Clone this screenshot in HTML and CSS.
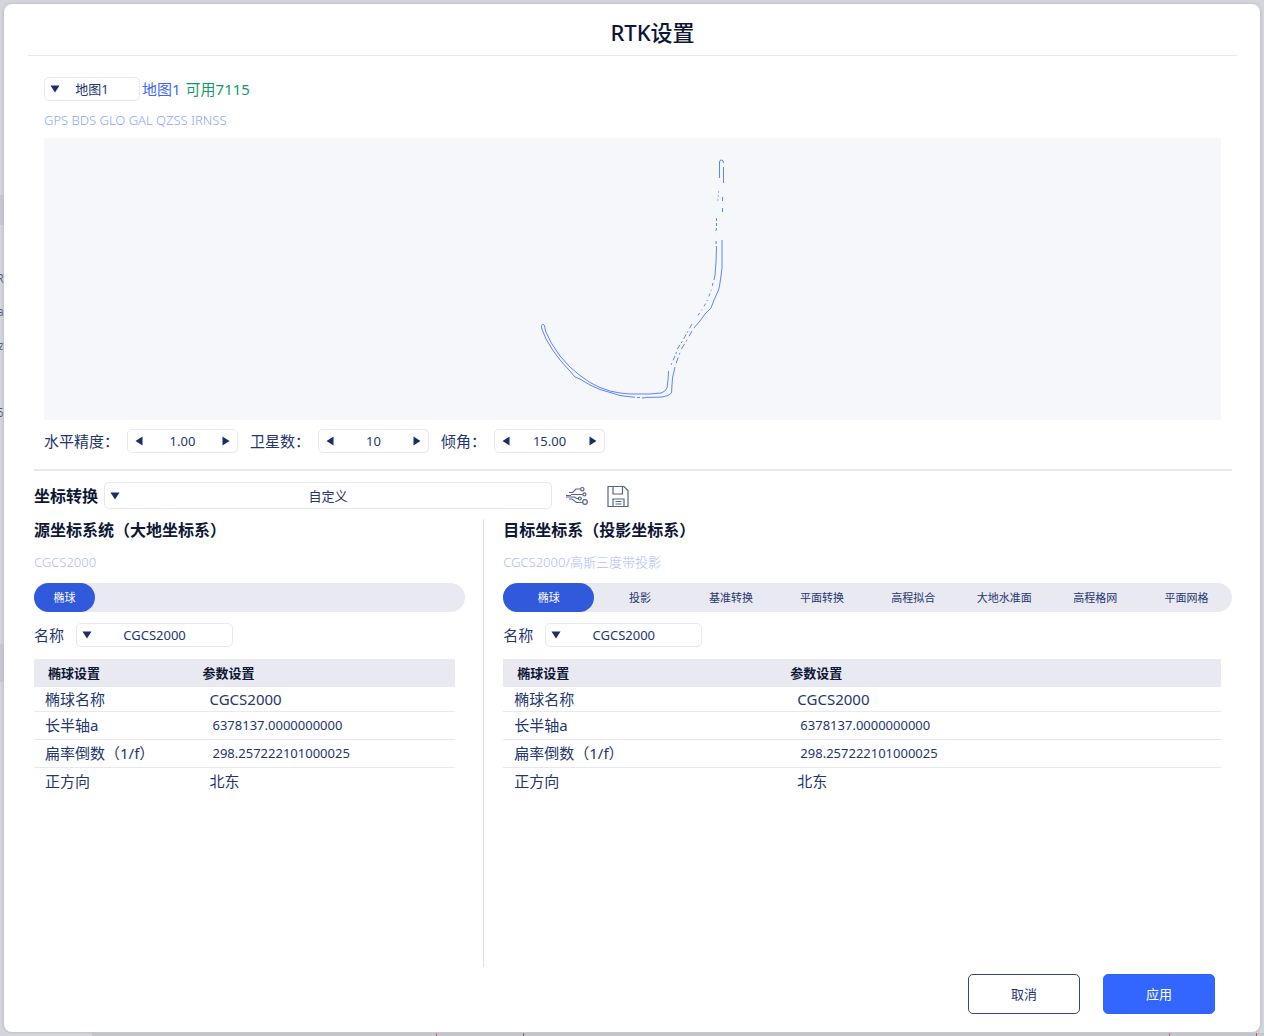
FILE: index.html
```html
<!DOCTYPE html>
<html lang="zh-CN">
<head>
<meta charset="utf-8">
<title>RTK设置</title>
<link rel="stylesheet" href="styles.css">
</head>
<body>
<div class="backdrop" aria-hidden="true">
  <span class="band band-a"></span>
  <span class="band band-b"></span>
  <span class="band band-c"></span>
  <span class="mark mark-r">R</span>
  <span class="mark mark-a">a</span>
  <span class="mark mark-z">z</span>
  <span class="mark mark-s">5</span>
  <span class="tick tick-a"></span>
  <span class="tick tick-b"></span>
  <span class="tick tick-c"></span>
  <span class="tick tick-d"></span>
</div>
<main class="dialog" role="dialog" aria-labelledby="dialog-title">
  <header class="dialog-header">
    <h1 id="dialog-title">RTK设置</h1>
  </header>

  <div class="dialog-body">
    <section class="status">
      <div class="map-row">
        <span class="dropdown dropdown-map">
          <select aria-label="地图"><option>地图1</option></select>
          <svg class="arrow" viewBox="0 0 10 8"><path d="M0.500 0.500H9.500L5 7.500z"/></svg>
        </span>
        <span class="map-name">地图1</span>
        <span class="map-ok">可用7115</span>
      </div>
      <p class="systems">GPS BDS GLO GAL QZSS IRNSS</p>
      <svg class="track" viewBox="44 138 1177 282" role="img" aria-label="轨迹">
        <path d="M719.500 178V162Q719.500 160 721.500 160Q723.500 160 723.500 163M723.500 167V183"/>
        <path class="faint" stroke-dasharray="2 2" d="M718.500 191V195L717.500 202"/>
        <path stroke-dasharray="4 7" d="M722.500 197V213"/>
        <path stroke-dasharray="3 2" d="M716.500 218V228L715.500 233M716 241L716.500 250"/>
        <path d="M716.500 248L716 262L715 275L714 280"/>
        <path stroke-dasharray="3 4 1 3" d="M713 283L711 291L707 301L703 308L697 317"/>
        <path stroke-dasharray="5 3 2 2" d="M692 324L687 333L683 340L678 348L675 356L671 365"/>
        <path d="M722 240V268L721 276L719.500 286L718.500 290L714 300L711 308L705 314L700 321L694 328"/>
        <path stroke-dasharray="6 4 2 3" d="M692 331L687 340L682 348L679 355L675 367"/>
        <path d="M668.500 371L668 380L667 388Q665 392 661 393L650 394H630L620 393L610 391L600 387.500L590 382.500L580 375.500L570 367L560 356L551 342.500L545.500 331L544.500 325.500Q543 323 541.500 325.500V328L546 339L552 349L560 360L569 370L575 377L580 379L590 385L600 389.500L612 393L620 395.500L632 397"/>
        <path stroke-dasharray="3 2" d="M632 397L645 398"/>
        <path d="M645 397.500L662 397L668 395.500L671.500 393L672 385L672.500 378L675 367"/>
      </svg>
      <div class="limits">
        <label for="accuracy">水平精度：</label>
        <span class="stepper">
          <button type="button" aria-label="减小水平精度"><svg viewBox="0 0 8 10"><path d="M7.500 0.500V9.500L0.500 5z"/></svg></button>
          <input id="accuracy" type="text" value="1.00">
          <button type="button" aria-label="增大水平精度"><svg viewBox="0 0 8 10"><path d="M0.500 0.500V9.500L7.500 5z"/></svg></button>
        </span>
        <label for="satellites">卫星数：</label>
        <span class="stepper">
          <button type="button" aria-label="减少卫星数"><svg viewBox="0 0 8 10"><path d="M7.500 0.500V9.500L0.500 5z"/></svg></button>
          <input id="satellites" type="text" value="10">
          <button type="button" aria-label="增加卫星数"><svg viewBox="0 0 8 10"><path d="M0.500 0.500V9.500L7.500 5z"/></svg></button>
        </span>
        <label for="tilt">倾角：</label>
        <span class="stepper">
          <button type="button" aria-label="减小倾角"><svg viewBox="0 0 8 10"><path d="M7.500 0.500V9.500L0.500 5z"/></svg></button>
          <input id="tilt" type="text" value="15.00">
          <button type="button" aria-label="增大倾角"><svg viewBox="0 0 8 10"><path d="M0.500 0.500V9.500L7.500 5z"/></svg></button>
        </span>
      </div>
    </section>

    <div class="convert">
      <label class="strong" for="convert">坐标转换</label>
      <span class="dropdown dropdown-convert">
        <select id="convert"><option>自定义</option></select>
        <svg class="arrow" viewBox="0 0 10 8"><path d="M0.500 0.500H9.500L5 7.500z"/></svg>
      </span>
      <button class="icon-button" type="button" aria-label="计算参数">
        <svg viewBox="0 0 24 24"><path d="M4 8.500H7.500L11 5H15.500M6 10.500H17.800M1 11.500H6M1 13H9.500L11.500 14.500H13.200M4 15H7L11.500 18.500H17.500"/><circle cx="17.300" cy="5.200" r="1.700"/><circle cx="19.400" cy="10.400" r="1.500"/><circle cx="14.800" cy="14.500" r="1.500"/><circle cx="20" cy="18" r="2.300"/></svg>
      </button>
      <button class="icon-button" type="button" aria-label="保存">
        <svg viewBox="0 0 24 24"><path d="M2 2.500H18L22 6.500V22.500H2zM7 2.500V10H16.500V2.500M7 22.500V15H18V22.500M9.500 17.500H15.500M9.500 20H15.500"/></svg>
      </button>
    </div>

    <div class="panes">
      <section class="pane source">
        <h2>源坐标系统（大地坐标系）</h2>
        <p class="crs">CGCS2000</p>
        <div class="tabs">
          <button class="tab active" type="button">椭球</button>
        </div>
        <div class="name-row">
          <label for="source-name">名称</label>
          <span class="dropdown dropdown-name">
            <select id="source-name"><option>CGCS2000</option></select>
            <svg class="arrow" viewBox="0 0 10 8"><path d="M0.500 0.500H9.500L5 7.500z"/></svg>
          </span>
        </div>
        <table>
          <thead><tr><th>椭球设置</th><th>参数设置</th></tr></thead>
          <tbody>
            <tr class="first"><td>椭球名称</td><td>CGCS2000</td></tr>
            <tr><td>长半轴a</td><td><input type="text" aria-label="长半轴a" value="6378137.0000000000"></td></tr>
            <tr><td>扁率倒数（1/f）</td><td><input type="text" aria-label="扁率倒数（1/f）" value="298.257222101000025"></td></tr>
            <tr><td>正方向</td><td>北东</td></tr>
          </tbody>
        </table>
      </section>

      <section class="pane target">
        <h2>目标坐标系（投影坐标系）</h2>
        <p class="crs">CGCS2000/高斯三度带投影</p>
        <div class="tabs">
          <button class="tab active" type="button">椭球</button>
          <button class="tab" type="button">投影</button>
          <button class="tab" type="button">基准转换</button>
          <button class="tab" type="button">平面转换</button>
          <button class="tab" type="button">高程拟合</button>
          <button class="tab" type="button">大地水准面</button>
          <button class="tab" type="button">高程格网</button>
          <button class="tab" type="button">平面网格</button>
        </div>
        <div class="name-row">
          <label for="target-name">名称</label>
          <span class="dropdown dropdown-name">
            <select id="target-name"><option>CGCS2000</option></select>
            <svg class="arrow" viewBox="0 0 10 8"><path d="M0.500 0.500H9.500L5 7.500z"/></svg>
          </span>
        </div>
        <table>
          <thead><tr><th>椭球设置</th><th>参数设置</th></tr></thead>
          <tbody>
            <tr class="first"><td>椭球名称</td><td>CGCS2000</td></tr>
            <tr><td>长半轴a</td><td><input type="text" aria-label="长半轴a" value="6378137.0000000000"></td></tr>
            <tr><td>扁率倒数（1/f）</td><td><input type="text" aria-label="扁率倒数（1/f）" value="298.257222101000025"></td></tr>
            <tr><td>正方向</td><td>北东</td></tr>
          </tbody>
        </table>
      </section>
    </div>

    <footer class="actions">
      <button class="button" type="button">取消</button>
      <button class="button primary" type="button">应用</button>
    </footer>
  </div>
</main>
</body>
</html>
```
FILE: styles.css
```css
:root {
  --ink: #24366f;
  --ink-dark: #0d1736;
  --arrow: #1b2d69;
  --line: #e8e8f1;
  --pale: #a9bbfb;
}

* { box-sizing: border-box; }

body {
  margin: 0;
  padding: 4px;
  background: #d5d6dc;
  color: var(--ink);
  font: 15px/20px "Noto Sans", "Noto Sans CJK SC", sans-serif;
}

h1, h2, p { margin: 0; }

button, input, select {
  margin: 0;
  padding: 0;
  border: 0;
  background: none;
  color: inherit;
  font: inherit;
}

/* Page underneath the dialog, visible only along the window's edges */
.backdrop {
  position: absolute;
  inset: 0;
  overflow: hidden;
  color: #4a5688;
}

.band, .mark, .tick { position: absolute; }
.band { background: #c5c6d1; }
.band-a { left: 0; top: 195px; width: 4px; height: 30px; }
.band-b { left: 0; top: 644px; width: 4px; height: 38px; }
.band-c { left: 92px; right: 0; bottom: 0; height: 3px; }
.mark { left: -6px; width: 10px; font-size: 13px; text-align: right; }
.mark-r { top: 268px; }
.mark-a { top: 301px; }
.mark-z { top: 335px; }
.mark-s { top: 402px; }
.tick { bottom: 0; width: 1px; height: 3px; background: #dc4a50; }
.tick-a { left: 436px; }
.tick-b { left: 523px; background: #6d5560; }
.tick-c { left: 1169px; }
.tick-d { left: 1256px; }

.dialog {
  position: relative;
  display: flex;
  flex-direction: column;
  min-height: calc(100vh - 8px);
  border-radius: 8px;
  background: #fff;
  box-shadow: 0 0 3px 1px #bfc0c6;
}

.dialog-header {
  margin: 0 23px 0 24px;
  padding: 14px 0 9px;
  border-bottom: 1px solid var(--line);
  text-align: center;
}

h1 {
  padding-left: 40px;
  color: var(--ink-dark);
  font: 500 22px/28px "Noto Sans", "Noto Sans CJK SC", sans-serif;
}

.dialog-body {
  flex: 1;
  display: flex;
  flex-direction: column;
  padding: 21px 28px 18px 30px;
}

.status {
  display: flex;
  flex-direction: column;
  padding: 0 11px 0 10px;
}

.map-row { display: flex; align-items: center; }
.map-name { margin: 0 5px 0 2px; color: #4468f2; }
.map-ok { color: #159a68; }

.dropdown { display: grid; align-items: center; height: 24px; }

.dropdown select {
  grid-area: 1 / 1;
  width: 100%;
  height: 100%;
  border: 1px solid var(--line);
  border-radius: 5px;
  background: #fff;
  appearance: none;
  font-size: 13px;
  text-align-last: center;
}

.arrow {
  grid-area: 1 / 1;
  width: 10px;
  height: 8px;
  margin-left: 6px;
  fill: var(--arrow);
  pointer-events: none;
}

.dropdown-map { width: 96px; }
.dropdown-convert { width: 448px; height: 27px; }
.dropdown-name { width: 157px; }

.systems, .crs { font-size: 13px; line-height: 18px; font-weight: 300; }
.systems { margin: 10px 0 9px; color: #8da5fa; }
.crs { margin: 12px 0; color: var(--pale); }

.track {
  width: 100%;
  height: 282px;
  background: #f5f7fb;
  fill: none;
  stroke: #5f84f7;
  stroke-width: 1;
}

.track .faint { opacity: 0.6; }

.limits { display: flex; align-items: center; margin: 9px 0 16px; }
.limits label { margin-right: 8px; }

.stepper {
  display: flex;
  width: 111px;
  height: 24px;
  margin-right: 12px;
  border: 1px solid var(--line);
  border-radius: 5px;
}

.stepper input { flex: 1; min-width: 0; font-size: 13px; text-align: center; }
.stepper button { display: grid; place-items: center; width: 22px; }
.stepper svg { width: 8px; height: 10px; fill: var(--arrow); }

.convert {
  display: flex;
  align-items: center;
  padding: 11px 0 10px;
  border-top: 2px solid var(--line);
}

.strong { margin-right: 6px; color: var(--ink-dark); font-size: 16px; font-weight: 700; }

.icon-button { height: 24px; margin-left: 13px; }
.icon-button + .icon-button { margin-left: 17px; }

.icon-button svg {
  display: block;
  width: 24px;
  height: 24px;
  fill: none;
  stroke: #56648f;
  stroke-width: 1.2;
}

.panes { flex: 1; display: grid; grid-template-columns: 3fr 5fr; }
.source { padding-right: 18px; }
.target { padding-left: 19px; border-left: 1px solid #dfdfea; }

h2 { color: var(--ink-dark); font-size: 16px; line-height: 22px; font-weight: 700; }

.tabs { display: flex; height: 29px; border-radius: 15px; background: #e9e9f2; }
.tab { flex: 1; border-radius: 15px; font-size: 11px; }
.source .tab { flex: none; width: 61px; }
.tab.active { background: #3059dc; color: #fff; }

.name-row { display: flex; align-items: center; gap: 12px; margin: 11px 0 12px; }

table { width: 100%; border-collapse: collapse; table-layout: fixed; }
.source table { width: calc(100% - 10px); }
.target table { width: calc(100% - 11px); }

th {
  width: 60%;
  height: 28px;
  padding: 0;
  background: #e9e9f2;
  color: var(--ink-dark);
  font-size: 13px;
  text-align: left;
}

th:first-child { width: 40%; padding-left: 14px; }

td { height: 28px; padding: 0 0 0 7px; border-bottom: 1px solid var(--line); }
td:first-child { padding-left: 11px; }
.first td { height: 24px; }
tr:last-child td { border-bottom: 0; }
td input { display: block; width: 100%; padding-left: 3px; font-size: 13px; }

.actions { display: flex; justify-content: flex-end; gap: 23px; padding: 7px 17px 0 0; }

.button {
  width: 112px;
  height: 40px;
  border: 1px solid #34467f;
  border-radius: 5px;
  font-size: 13px;
}

.button.primary { border-color: #3366ff; background: #3366ff; color: #fff; }
```
